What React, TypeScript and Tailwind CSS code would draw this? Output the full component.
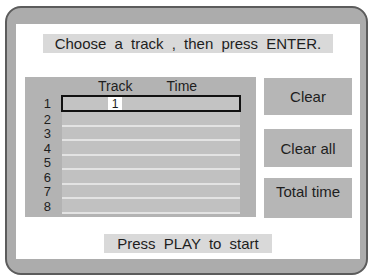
const rows = [1, 2, 3, 4, 5, 6, 7, 8]

const font = { fontFamily: '"Liberation Sans", Arial, sans-serif' }

export default function App() {
  return (
    <div className="w-[370px] h-[279px] bg-white pt-[6px] pl-[5px] text-[#1e1e1e]" style={font}>
      <div className="w-[363px] h-[269px] rounded-[16px] border-2 border-[#5c5c5c] bg-[#acacac] pl-[9px] pt-[16px] pr-[6px] pb-[14px]">
        <div className="w-full h-full bg-white flex flex-col">
          <div className="mt-[10px] ml-[27px] w-[290px] h-[19px] bg-[#d9d9d9] flex items-center justify-center text-[15px] leading-none [word-spacing:4px]">
            Choose a track , then press ENTER.
          </div>

          <div className="mt-[24px] flex items-start">
            {/* track list */}
            <div className="ml-[9px] w-[231px] h-[140px] bg-[#b3b3b3] flex flex-col">
              <div className="h-[18px] flex pl-[73px] gap-[34px] text-[14px] leading-[18px]">
                <span>Track</span>
                <span>Time</span>
              </div>
              {rows.map((n) => (
                <div key={n} className={`flex ${n === 1 ? 'h-[17px]' : 'h-[14.5px]'}`}>
                  <span className="w-[37px] pr-[11px] flex items-center justify-end text-[13px] leading-none">
                    {n}
                  </span>
                  {n === 1 ? (
                    <div className="-mx-px w-[180px] border-2 border-[#111] bg-[#c3c3c3] flex">
                      <span className="ml-[45px] w-[14px] bg-white flex items-center justify-center text-[12px] leading-none">
                        1
                      </span>
                    </div>
                  ) : (
                    <div className="w-[178px] bg-[#c1c1c1] border-b-2 border-[#e3e3e3]" />
                  )}
                </div>
              ))}
            </div>

            {/* buttons */}
            <div className="ml-[8px] mt-px w-[88px] flex flex-col text-[15px] leading-none">
              <div className="h-[37px] bg-[#b6b6b6] flex items-center justify-center">Clear</div>
              <div className="mt-[14px] h-[38px] bg-[#b6b6b6] flex items-center justify-center">Clear all</div>
              <div className="mt-[11px] h-[40px] bg-[#b6b6b6] flex justify-center pt-[6px]">Total time</div>
            </div>
          </div>

          <div className="mt-[16px] ml-[88px] w-[168px] h-[19px] bg-[#d9d9d9] flex items-center justify-center text-[15px] leading-none [word-spacing:4px]">
            Press PLAY to start
          </div>
        </div>
      </div>
    </div>
  )
}
